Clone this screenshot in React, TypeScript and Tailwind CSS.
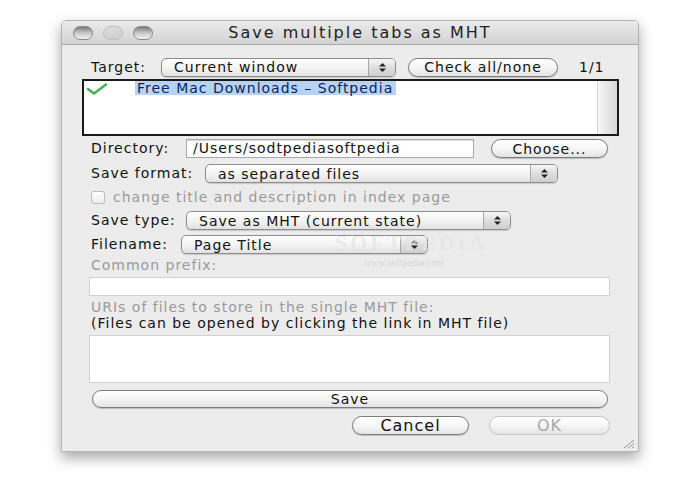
import React from "react";

const font = { fontFamily: '"DejaVu Sans", Verdana, sans-serif' };

function Arrows() {
  return (
    <svg width="9" height="11" viewBox="0 0 9 11">
      <path d="M4.5 1 L8 4.5 L1 4.5 Z" fill="#222" />
      <path d="M4.5 10 L8 6.5 L1 6.5 Z" fill="#222" />
    </svg>
  );
}

function Select({ text, className }: { text: string; className: string }) {
  return (
    <div
      className={`flex h-[19px] items-stretch rounded-[5px] border border-[#8e8e8e] bg-gradient-to-b from-white via-[#f4f4f4] to-[#e2e2e2] shadow-[0_1px_1px_rgba(0,0,0,0.15)] ${className}`}
    >
      <div className="flex flex-1 items-center pl-3 text-[14px] tracking-[1px] text-[#111] leading-none">{text}</div>
      <div className="flex w-[27px] items-center justify-center rounded-r-[4px] border-l border-[#a8a8a8] bg-gradient-to-b from-[#f7f7f7] via-[#dedede] to-[#cfcfcf]">
        <Arrows />
      </div>
    </div>
  );
}

function Button({ text, className, disabled }: { text: string; className: string; disabled?: boolean }) {
  return (
    <div
      className={`flex items-center justify-center rounded-full border bg-gradient-to-b from-white via-[#f6f6f6] to-[#e4e4e4] leading-none tracking-[1px] ${
        disabled ? "border-[#c4c4c4] text-[#a8a8a8]" : "border-[#7d7d7d] text-[#111] shadow-[0_1px_1px_rgba(0,0,0,0.2)]"
      } ${className}`}
    >
      {text}
    </div>
  );
}

function Light({ faded }: { faded?: boolean }) {
  return (
    <div
      className={`h-[14px] w-[20px] rounded-full border ${
        faded
          ? "border-[#bdbdbd] bg-gradient-to-b from-[#dcdcdc] to-[#cfcfcf]"
          : "border-[#8a8a8a] bg-gradient-to-b from-[#7a7a7a] via-[#c9c9c9] to-[#f2f2f2]"
      }`}
    />
  );
}

export default function App() {
  return (
    <div className="relative h-[500px] w-[700px] overflow-hidden bg-white" style={font}>
      <div className="ml-[61px] mt-[20px] flex h-[432px] w-[578px] flex-col overflow-hidden rounded-t-[5px] border border-[#b5b5b5] bg-[#ececec] shadow-[0_6px_14px_rgba(0,0,0,0.35)]">
        {/* Title bar */}
        <div className="relative flex h-[24px] shrink-0 items-center border-b border-[#a9a9a9] bg-gradient-to-b from-[#ebebeb] to-[#d3d3d3]">
          <div className="ml-[11px] flex items-center gap-[10px]">
            <Light />
            <Light faded />
            <Light />
          </div>
          <div className="absolute inset-0 flex items-center justify-center pl-[20px] text-[16px] tracking-[2px] text-[#222]">
            Save multiple tabs as MHT
          </div>
        </div>

        {/* Target row */}
        <div className="ml-[29px] mt-[12px] flex h-[20px] items-center text-[14px] tracking-[1px] text-[#111]">
          <span className="w-[70px]">Target:</span>
          <Select text="Current window" className="w-[235px]" />
          <Button text="Check all/none" className="ml-[12px] h-[19px] w-[150px] text-[14px]" />
          <span className="ml-[21px]">1/1</span>
        </div>

        {/* List */}
        <div className="ml-[20px] mt-[2px] flex h-[57px] w-[537px] border-2 border-[#1a1a1a] bg-white">
          <div className="flex flex-1 items-start">
            <svg width="22" height="12" viewBox="0 0 22 12" className="ml-[2px] mt-[2px]">
              <path d="M2 6 L8 10.5 L20 1.5" fill="none" stroke="#4caf50" strokeWidth="2.6" strokeLinecap="round" strokeLinejoin="round" />
            </svg>
            <div className="ml-[27px] flex h-[14px] items-center bg-[#b6d3f5] pl-[2px] pr-[3px] text-[14px] tracking-[1px] leading-none text-[#0e1f5c]">
              Free Mac Downloads – Softpedia
            </div>
          </div>
          <div className="w-[20px] border-l border-[#d5d5d5] bg-gradient-to-r from-[#f8f8f8] via-[#e6e6e6] to-[#d8d8d8]" />
        </div>

        {/* Directory */}
        <div className="ml-[29px] mt-[3px] flex h-[19px] items-center text-[14px] tracking-[1px] text-[#111]">
          <span className="w-[95px]">Directory:</span>
          <div className="flex h-[19px] w-[288px] items-center border border-[#a9a9a9] bg-white pl-[6px] shadow-[inset_0_1px_1px_rgba(0,0,0,0.15)]">
            /Users/sodtpediasoftpedia
          </div>
          <Button text="Choose..." className="ml-[17px] h-[19px] w-[117px] text-[14px]" />
        </div>

        {/* Save format */}
        <div className="ml-[29px] mt-[6px] flex h-[19px] items-center text-[14px] tracking-[1px] text-[#111]">
          <span className="w-[114px]">Save format:</span>
          <Select text="as separated files" className="w-[353px]" />
        </div>

        {/* Checkbox */}
        <div className="ml-[29px] mt-[6px] flex h-[16px] items-center text-[14px] tracking-[1px] text-[#9a9a9a]">
          <div className="h-[13px] w-[14px] rounded-[3px] border border-[#bdbdbd] bg-gradient-to-b from-white to-[#ececec]" />
          <span className="ml-[8px]">change title and description in index page</span>
        </div>

        {/* Save type */}
        <div className="ml-[29px] mt-[6px] flex h-[19px] items-center text-[14px] tracking-[1px] text-[#111]">
          <span className="w-[95px]">Save type:</span>
          <Select text="Save as MHT (current state)" className="w-[325px]" />
        </div>

        {/* Filename */}
        <div className="ml-[29px] mt-[5px] flex h-[19px] items-center text-[14px] tracking-[1px] text-[#111]">
          <span className="w-[90px]">Filename:</span>
          <Select text="Page Title" className="w-[247px]" />
        </div>

        {/* Common prefix */}
        <div className="ml-[29px] mt-[4px] flex h-[14px] items-center text-[14px] tracking-[1px] text-[#9a9a9a]">
          Common prefix:
        </div>
        <div className="ml-[27px] mt-[5px] h-[19px] w-[521px] border border-[#d2d2d2] bg-white" />

        {/* URIs */}
        <div className="ml-[29px] mt-[4px] flex h-[14px] items-center text-[14px] tracking-[1px] text-[#9a9a9a]">
          URIs of files to store in the single MHT file:
        </div>
        <div className="ml-[29px] mt-[2px] flex h-[14px] items-center text-[14px] tracking-[1px] text-[#111]">
          (Files can be opened by clicking the link in MHT file)
        </div>
        <div className="ml-[27px] mt-[5px] h-[48px] w-[521px] border border-[#d2d2d2] bg-white" />

        {/* Save */}
        <Button text="Save" className="ml-[30px] mt-[7px] h-[18px] w-[516px] text-[14px]" />

        {/* Cancel / OK */}
        <div className="ml-[290px] mt-[8px] flex h-[19px] items-center gap-[20px]">
          <Button text="Cancel" className="h-[19px] w-[117px] text-[16px]" />
          <Button text="OK" disabled className="h-[19px] w-[121px] text-[16px]" />
        </div>

        {/* resize grip */}
        <div className="mt-auto flex justify-end pb-[2px] pr-[2px]">
          <svg width="14" height="10" viewBox="0 0 14 10">
            <path d="M2 9 L12 1 M6 9 L12 4.5 M10 9 L12 7.5" stroke="#9a9a9a" strokeWidth="1" />
          </svg>
        </div>
      </div>

      {/* watermark */}
      <div className="pointer-events-none absolute left-[335px] top-[232px] text-[22px] font-bold leading-none tracking-[3px] text-[#e6e6e6] opacity-70" style={{ fontFamily: '"Liberation Serif", serif' }}>
        SOFTPEDIA
      </div>
      <div className="pointer-events-none absolute left-[364px] top-[258px] text-[10px] leading-none text-[#d8d8d8]" style={{ fontFamily: '"Liberation Serif", serif' }}>
        www.softpedia.com
      </div>
    </div>
  );
}
